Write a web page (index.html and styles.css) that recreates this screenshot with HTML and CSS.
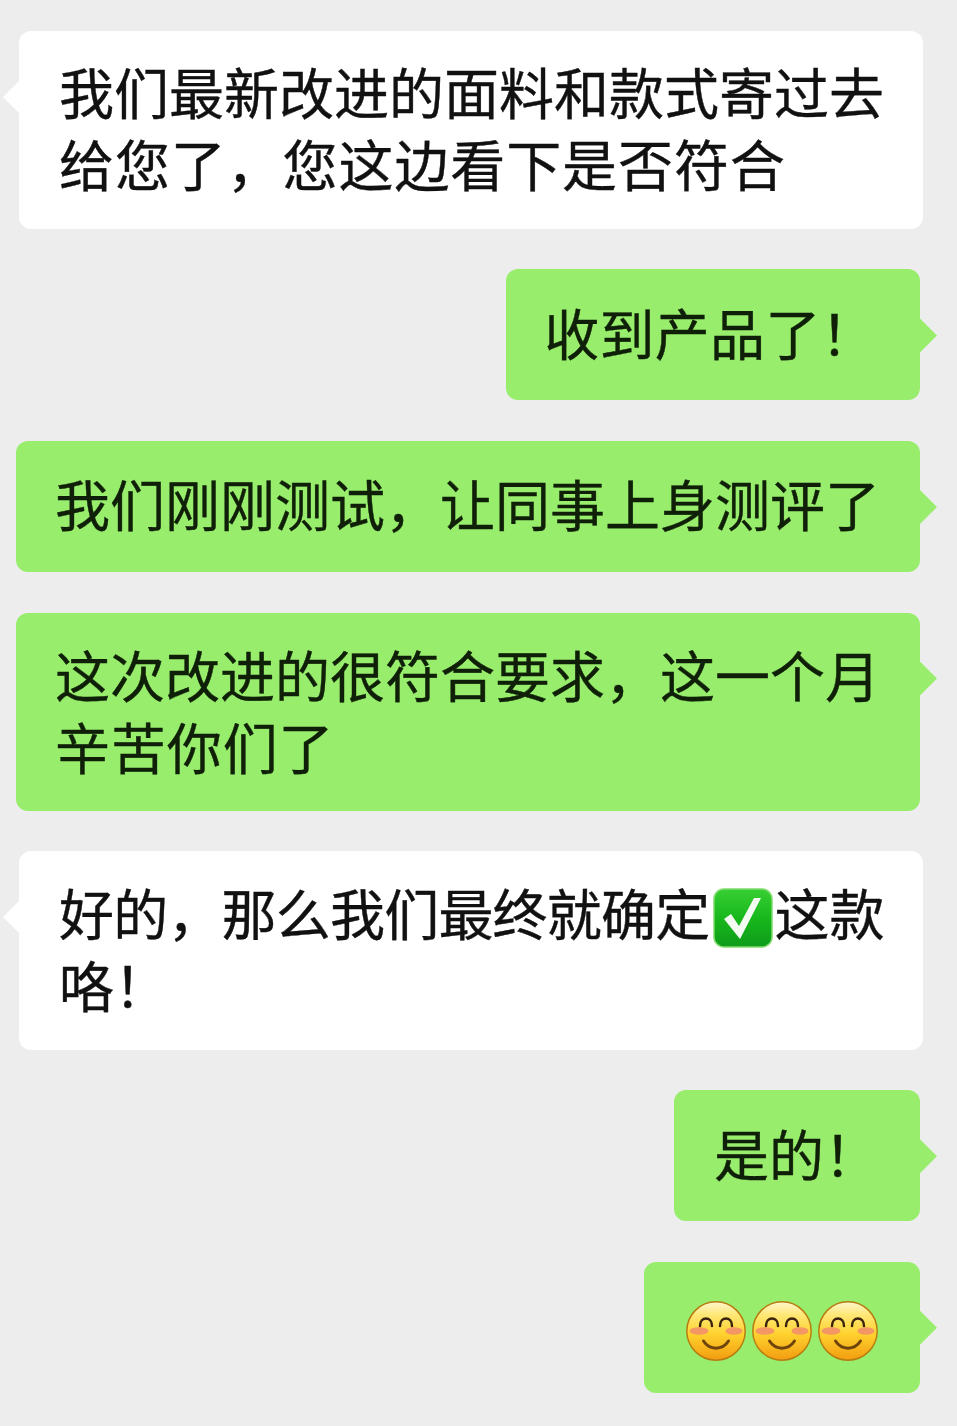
FILE: index.html
```html
<!DOCTYPE html>
<html lang="zh-CN">
<head>
<meta charset="utf-8">
<title>聊天记录</title>
<link rel="stylesheet" href="styles.css">
</head>
<body>
<svg class="defs" width="0" height="0" aria-hidden="true">
  <defs>
    <linearGradient id="face" x1="0" y1="0" x2="0" y2="1">
      <stop offset="0" stop-color="#fff6d0"/>
      <stop offset="0.22" stop-color="#ffe877"/>
      <stop offset="0.55" stop-color="#ffd22e"/>
      <stop offset="1" stop-color="#f29c10"/>
    </linearGradient>
    <linearGradient id="tile" x1="0" y1="0" x2="0" y2="1">
      <stop offset="0" stop-color="#38cf34"/>
      <stop offset="0.5" stop-color="#18b81c"/>
      <stop offset="1" stop-color="#0e9c1a"/>
    </linearGradient>
    <symbol id="smile" viewBox="0 0 60 60">
      <circle cx="30" cy="30" r="29.2" fill="url(#face)" stroke="#b87d10" stroke-width="1.500"/>
      <ellipse cx="13" cy="30" rx="9.500" ry="3.800" fill="#f28c6c" opacity=".85"/>
      <ellipse cx="48" cy="30" rx="8.500" ry="3.800" fill="#f28c6c" opacity=".85"/>
      <path d="M14 25c0-10 12-10 12 0M34 25c0-10 12-10 12 0" fill="none" stroke="#3a250c" stroke-width="2.500" stroke-linecap="round"/>
      <path d="M17.500 40c6 9.500 19 9.500 25 0" fill="none" stroke="#6e430c" stroke-width="3" stroke-linecap="round"/>
    </symbol>
  </defs>
</svg>
<main class="chat">
  <div class="bubble incoming">我们最新改进的面料和款式寄过去<br><span class="loose">给您了，您这边看下是否符合</span></div>
  <div class="bubble outgoing">收到产品了！</div>
  <div class="bubble outgoing wide">我们刚刚测试，让同事上身测评了</div>
  <div class="bubble outgoing wide two">这次改进的很符合要求，这一个月<br><span class="loose">辛苦你们了</span></div>
  <div class="bubble incoming tall"><span class="snug">好的，那么我们最终就确定</span><svg class="check" viewBox="0 0 60 60" role="img" aria-label="✅"><rect x="1" y="1" width="58" height="58" rx="10" fill="url(#tile)" stroke="#7fdc6c" stroke-width="1.500"/><path d="M11 31l7-5 8 12L41 10h7L27 51z" fill="#f4fbf2"/></svg>这款<br>咯！</div>
  <div class="bubble outgoing brief">是的！</div>
  <div class="bubble outgoing emojis">
    <svg class="smile" role="img" aria-label="微笑"><use href="#smile"/></svg>
    <svg class="smile" role="img" aria-label="微笑"><use href="#smile"/></svg>
    <svg class="smile" role="img" aria-label="微笑"><use href="#smile"/></svg>
  </div>
</main>
</body>
</html>
```
FILE: styles.css
```css
html, body {
  margin: 0;
  background: #ededed;
}

.defs {
  position: absolute;
}

.chat {
  display: flex;
  flex-direction: column;
  gap: 40.55px;
  padding: 30.9px 34px 33px 19px;
  height: 1426px;
  box-sizing: border-box;
  overflow: hidden;
  font-family: "Noto Sans CJK SC", "Noto Sans", sans-serif;
  font-size: 55px;
  font-weight: 400;
  line-height: 72px;
  color: #111111;
  -webkit-text-stroke: 0.4px currentColor;
}

.bubble {
  position: relative;
  box-sizing: border-box;
  border-radius: 12px;
  white-space: nowrap;
}

.bubble::before {
  content: "";
  position: absolute;
  top: 49px;
  width: 17px;
  height: 34px;
}

.loose {
  letter-spacing: 0.9px;
}

.snug {
  letter-spacing: -0.8px;
}

.incoming {
  align-self: flex-start;
  width: 904px;
  padding: 23px 0 31px 40px;
  background: #ffffff;
}

.incoming::before {
  left: -16px;
  background: #ffffff;
  clip-path: polygon(100% 0, 0 50%, 100% 100%);
}

.tall {
  padding-top: 24px;
  padding-bottom: 30.6px;
}

.outgoing {
  align-self: flex-end;
  margin-right: 3px;
  padding: 25.5px 44px 33.5px 38px;
  letter-spacing: 0.3px;
  background: #98ee6c;
  color: #0f1f08;
}

.outgoing::before {
  right: -17px;
  background: #98ee6c;
  clip-path: polygon(0 0, 100% 50%, 0 100%);
}

.wide {
  width: 904px;
  padding-left: 39px;
  padding-right: 0;
  letter-spacing: 0;
}

.two {
  padding-top: 24.5px;
  padding-bottom: 29.5px;
}

.brief {
  padding-left: 40px;
  padding-right: 41px;
  letter-spacing: 0;
}

.check {
  display: inline-block;
  width: 60px;
  height: 60px;
  margin: -4px 1px -4px 4px;
  vertical-align: -9px;
}

.emojis {
  display: flex;
  gap: 6px;
  padding: 39px 42px 32px 42px;
}

.smile {
  display: block;
  width: 60px;
  height: 60px;
}
```
